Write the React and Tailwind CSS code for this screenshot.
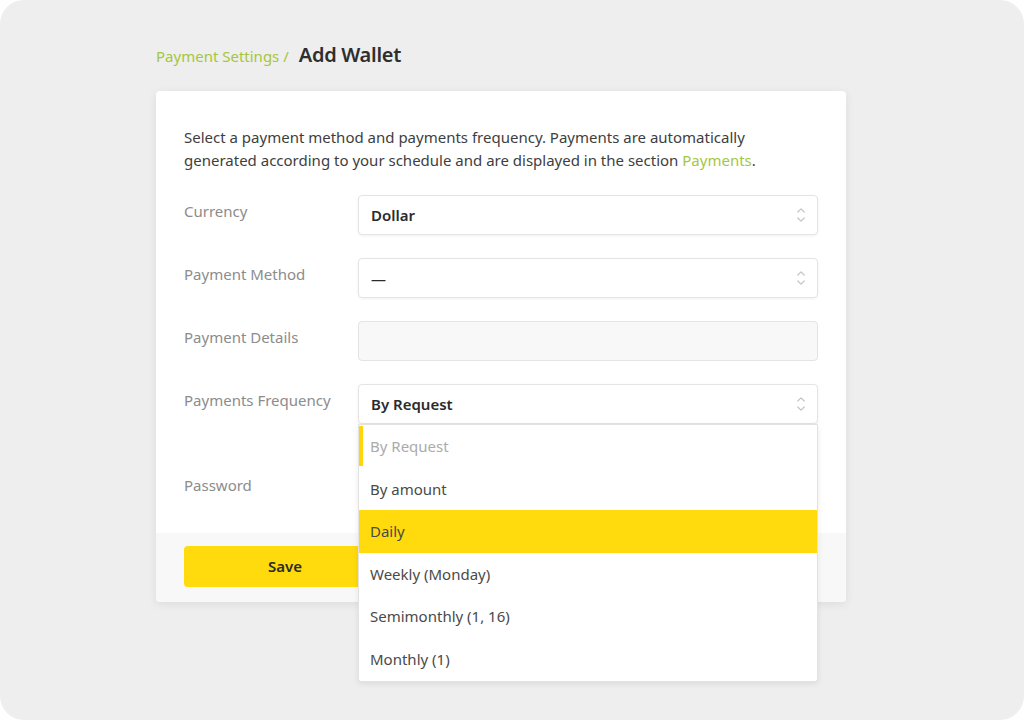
import React from "react";

function Chevrons() {
  return (
    <svg width="10" height="18" viewBox="0 0 10 18" fill="none" stroke="#c4c4c4" strokeWidth="1.2" strokeLinecap="round" strokeLinejoin="round">
      <path d="M1.8 6 L5 2.8 L8.2 6" />
      <path d="M1.8 12 L5 15.2 L8.2 12" />
    </svg>
  );
}

function Row({ label, children, className = "" }) {
  return (
    <div className={"flex " + className}>
      <div className="w-[174px] shrink-0 pt-[5px] text-[15px] text-[#8c8c8c]">{label}</div>
      <div className="flex-1">{children}</div>
    </div>
  );
}

function Select({ value, children }) {
  return (
    <div className="relative">
      <div className="flex h-[40px] items-center justify-between rounded-[4px] border border-[#e4e4e4] bg-white pl-[12px] pr-[11px] shadow-[0_1px_3px_rgba(0,0,0,0.06)]">
        <span className="text-[15px] font-semibold text-[#2b2b2b]">{value}</span>
        <Chevrons />
      </div>
      {children}
    </div>
  );
}

const items = ["By Request", "By amount", "Daily", "Weekly (Monday)", "Semimonthly (1, 16)", "Monthly (1)"];

export default function App() {
  return (
    <div className="h-[720px] w-[1024px] bg-white" style={{ fontFamily: '"Noto Sans", "Open Sans", sans-serif' }}>
      <div className="h-full w-full rounded-[24px] bg-[#eeeeee] pl-[156px] pt-[40px]">
        <div className="w-[690px]">
          <div className="flex items-baseline gap-[10px]">
            <span className="text-[15px] text-[#a6c63c]">Payment Settings /</span>
            <span className="text-[20px] font-semibold tracking-[-0.3px] text-[#2e2e2e]">Add Wallet</span>
          </div>
          <div className="mt-[21px] rounded-[4px] bg-white shadow-[0_2px_10px_rgba(0,0,0,0.08)]">
            <div className="px-[28px] pb-[24px] pt-[35px]">
              <p className="text-[15px] leading-[23px] text-[#3e3e3e]">
                Select a payment method and payments frequency. Payments are automatically generated according to your schedule and are displayed in the section <span className="text-[#a6c63c]">Payments</span>.
              </p>
              <div className="mt-[23px] flex flex-col gap-[23px]">
                <Row label="Currency">
                  <Select value="Dollar" />
                </Row>
                <Row label="Payment Method">
                  <Select value="—" />
                </Row>
                <Row label="Payment Details">
                  <div className="h-[40px] rounded-[4px] border border-[#e4e4e4] bg-[#f8f8f8]" />
                </Row>
                <Row label="Payments Frequency">
                  <Select value="By Request">
                    <div className="absolute left-0 right-0 top-[40px] z-10 flex flex-col rounded-b-[3px] border border-[#e2e2e2] bg-white shadow-[0_2px_6px_rgba(0,0,0,0.08)]">
                      {items.map((it, i) => (
                        <div
                          key={it}
                          className={
                            "relative flex h-[42.6px] items-center pl-[11px] text-[15px] " +
                            (i === 0 ? "text-[#ababab]" : i === 2 ? "bg-[#ffda0c] text-[#4a4a4a]" : "text-[#4a4a4a]")
                          }
                        >
                          {i === 0 && <div className="absolute left-0 top-[1px] h-[40px] w-[4px] bg-[#ffd60a]" />}
                          {it}
                        </div>
                      ))}
                    </div>
                  </Select>
                </Row>
                <Row label="Password" className="mt-[22px]">
                  <div className="h-[40px] rounded-[4px] border border-[#e4e4e4] bg-white" />
                </Row>
              </div>
            </div>
            <div className="rounded-b-[4px] bg-[#f8f8f8] px-[28px] pb-[15px] pt-[13px]">
              <button className="h-[41px] w-[202px] rounded-[4px] bg-[#ffda0c] text-[15px] font-semibold text-[#2b2b2b]">Save</button>
            </div>
          </div>
        </div>
      </div>
    </div>
  );
}
